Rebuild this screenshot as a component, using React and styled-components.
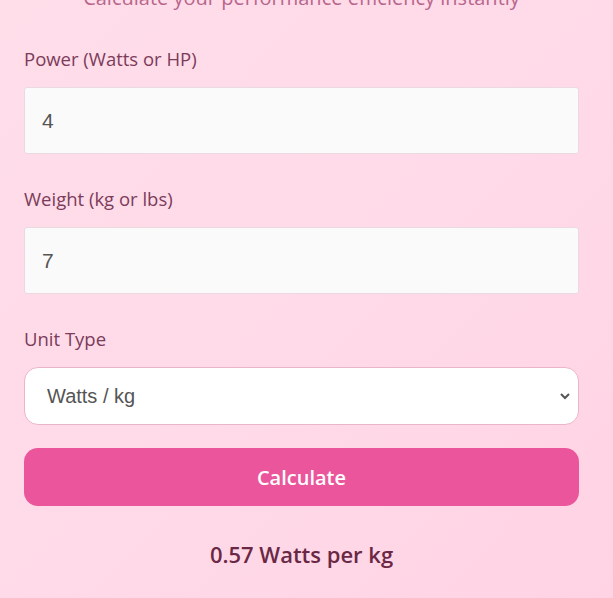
import React, { useState } from 'react';
import styled, { createGlobalStyle } from 'styled-components';

const GlobalStyle = createGlobalStyle`
  html, body {
    margin: 0;
    padding: 0;
  }
  body {
    min-height: 100vh;
    background: linear-gradient(135deg, #ffdde9 0%, #ffd9e8 60%, #ffd3e4 100%);
    font-family: "Open Sans", "Noto Sans", sans-serif;
    overflow: hidden;
  }
`;

const App = () => {
  const [power, setPower] = useState('4');
  const [weight, setWeight] = useState('7');
  const [unit, setUnit] = useState('watts');
  const [result, setResult] = useState('0.57 Watts per kg');

  const calculate = () => {
    const p = parseFloat(power);
    const w = parseFloat(weight);
    if (!p || !w) return;
    const value = (p / w).toFixed(2);
    setResult(unit === 'watts' ? `${value} Watts per kg` : `${value} HP per lb`);
  };

  return (
    <>
      <GlobalStyle />
      <Wrapper>
        <Subtitle>Calculate your performance efficiency instantly</Subtitle>
        <Field>
          <Label htmlFor="power">Power (Watts or HP)</Label>
          <Input
            id="power"
            type="number"
            value={power}
            onChange={(e) => setPower(e.target.value)}
          />
        </Field>
        <Field>
          <Label htmlFor="weight">Weight (kg or lbs)</Label>
          <Input
            id="weight"
            type="number"
            value={weight}
            onChange={(e) => setWeight(e.target.value)}
          />
        </Field>
        <Field $last>
          <Label htmlFor="unit">Unit Type</Label>
          <SelectBox>
            <Select id="unit" value={unit} onChange={(e) => setUnit(e.target.value)}>
              <option value="watts">Watts / kg</option>
              <option value="hp">HP / lb</option>
            </Select>
            <Chevron viewBox="0 0 24 24">
              <path d="M6 9l6 6 6-6" />
            </Chevron>
          </SelectBox>
        </Field>
        <Button onClick={calculate}>Calculate</Button>
        <Result>{result}</Result>
      </Wrapper>
    </>
  );
};

export default App;

const Wrapper = styled.div`
  padding: 0 34px 0 24px;
  margin-top: -16px;
  display: flex;
  flex-direction: column;
`;

const Subtitle = styled.p`
  margin: 0 0 35px;
  text-align: center;
  font-size: 20px;
  color: #b7668c;
`;

const Field = styled.div`
  display: flex;
  flex-direction: column;
  margin-bottom: ${(p) => (p.$last ? '23px' : '32px')};
`;

const Label = styled.label`
  font-size: 18.5px;
  color: #7b3b5a;
  margin-bottom: 16px;
`;

const Input = styled.input`
  box-sizing: border-box;
  height: 67px;
  padding: 0 17px;
  border: 1px solid #ead9df;
  border-radius: 3px;
  background: #fafafa;
  font-family: "Liberation Sans", Arial, sans-serif;
  font-size: 21px;
  color: #555;
  outline: none;
  -moz-appearance: textfield;
  &::-webkit-inner-spin-button,
  &::-webkit-outer-spin-button {
    -webkit-appearance: none;
    margin: 0;
  }
`;

const SelectBox = styled.div`
  position: relative;
`;

const Select = styled.select`
  box-sizing: border-box;
  width: 100%;
  height: 58px;
  padding: 0 22px;
  border: 1px solid #ebb5c9;
  border-radius: 14px;
  background: #fff;
  font-family: "Liberation Sans", Arial, sans-serif;
  font-size: 20px;
  color: #555;
  appearance: none;
  outline: none;
`;

const Chevron = styled.svg`
  position: absolute;
  right: 6px;
  top: 50%;
  width: 16px;
  height: 16px;
  margin-top: -8px;
  fill: none;
  stroke: #555;
  stroke-width: 3;
  pointer-events: none;
`;

const Button = styled.button`
  height: 58px;
  border: none;
  border-radius: 14px;
  background: #eb559b;
  color: #fff;
  font-family: "Open Sans", "Noto Sans", sans-serif;
  font-size: 20px;
  font-weight: 600;
  cursor: pointer;
`;

const Result = styled.div`
  margin-top: 33px;
  text-align: center;
  font-size: 22px;
  font-weight: 600;
  color: #6a2844;
`;
